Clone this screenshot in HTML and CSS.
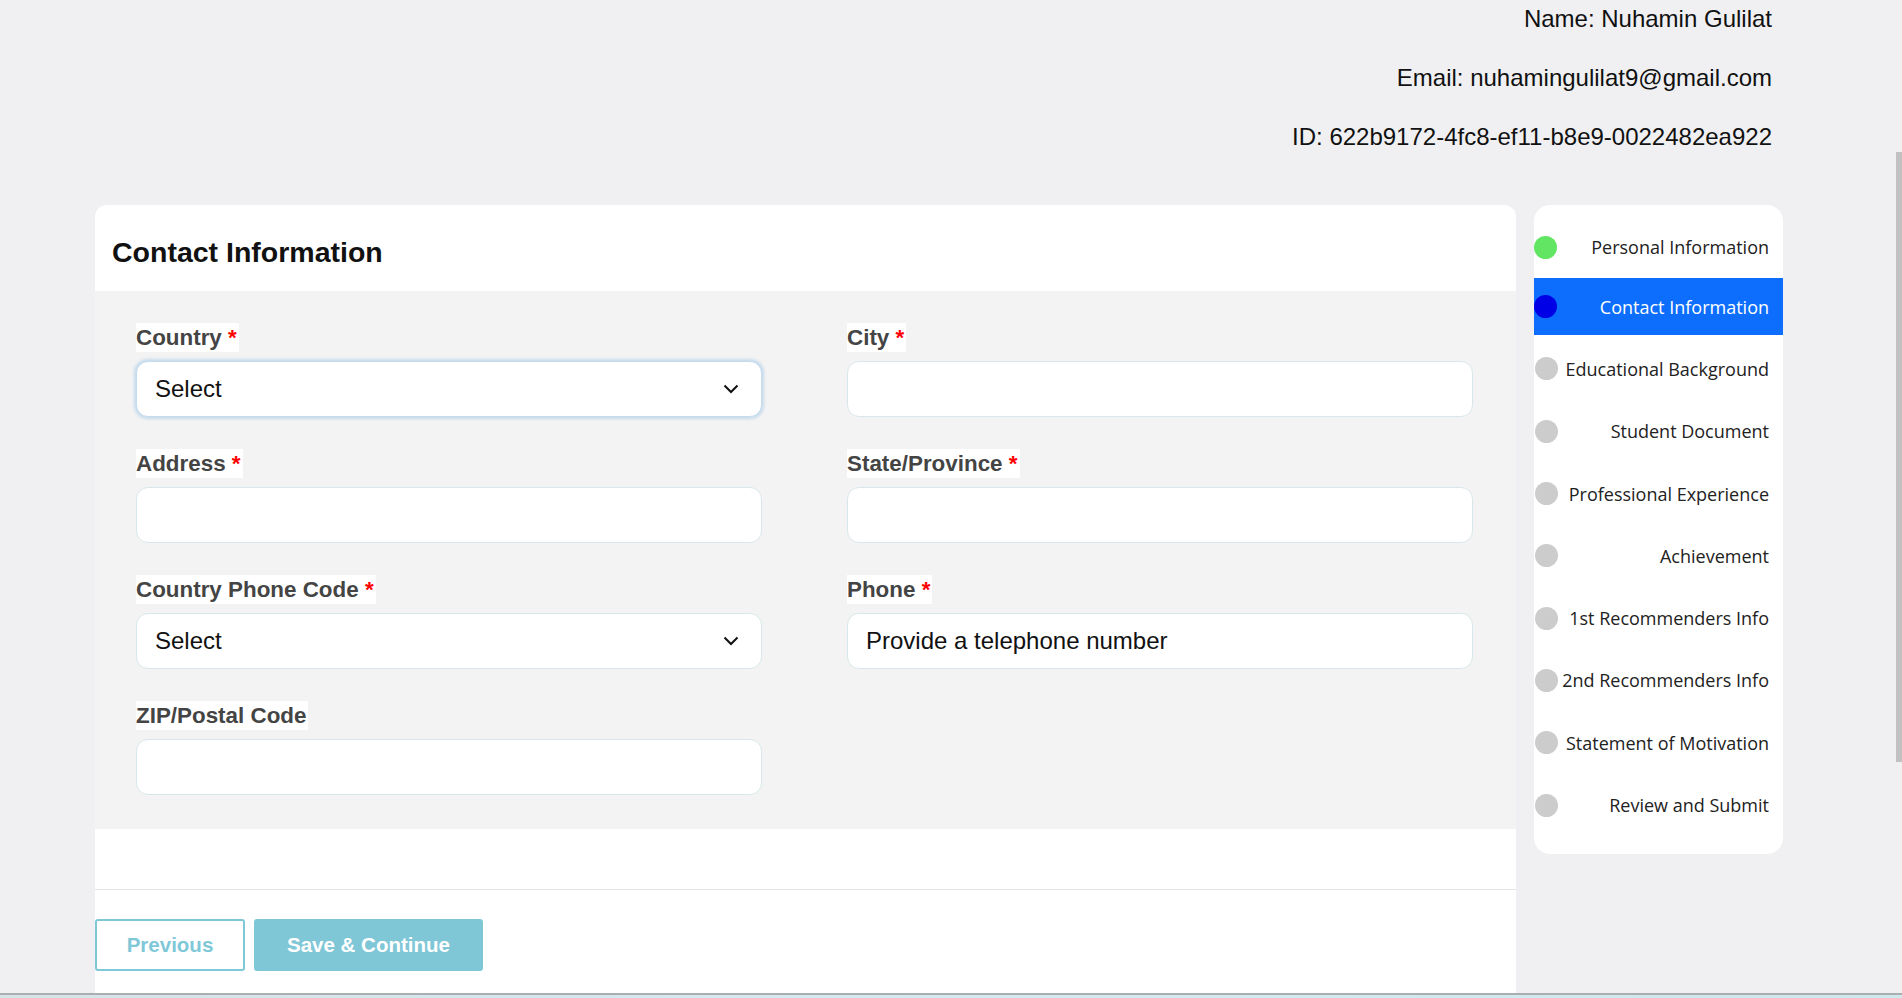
FILE: index.html
```html
<!DOCTYPE html>
<html lang="en">
<head>
<meta charset="utf-8">
<title>Contact Information</title>
<link rel="stylesheet" href="styles.css">
</head>
<body>
<div class="page">
  <header class="user-info">
    <div class="info-line">Name: Nuhamin Gulilat</div>
    <div class="info-line">Email: nuhamingulilat9@gmail.com</div>
    <div class="info-line">ID: 622b9172-4fc8-ef11-b8e9-0022482ea922</div>
  </header>

  <main class="main-row">
    <section class="form-card">
      <div class="card-head">
        <h2 class="card-title">Contact Information</h2>
      </div>
      <div class="card-body">
        <div class="field">
          <label class="field-label">Country <span class="req">*</span></label>
          <div class="control select focused">
            <span class="control-text">Select</span>
            <svg class="chev" width="16" height="10" viewBox="0 0 16 10"><polyline points="1.5,1.5 8,8 14.5,1.5" fill="none" stroke="#111" stroke-width="2"/></svg>
          </div>
        </div>
        <div class="field">
          <label class="field-label">City <span class="req">*</span></label>
          <div class="control"></div>
        </div>
        <div class="field">
          <label class="field-label">Address <span class="req">*</span></label>
          <div class="control"></div>
        </div>
        <div class="field">
          <label class="field-label">State/Province <span class="req">*</span></label>
          <div class="control"></div>
        </div>
        <div class="field">
          <label class="field-label">Country Phone Code <span class="req">*</span></label>
          <div class="control select">
            <span class="control-text">Select</span>
            <svg class="chev" width="16" height="10" viewBox="0 0 16 10"><polyline points="1.5,1.5 8,8 14.5,1.5" fill="none" stroke="#111" stroke-width="2"/></svg>
          </div>
        </div>
        <div class="field">
          <label class="field-label">Phone <span class="req">*</span></label>
          <div class="control"><span class="control-text">Provide a telephone number</span></div>
        </div>
        <div class="field">
          <label class="field-label">ZIP/Postal Code</label>
          <div class="control"></div>
        </div>
      </div>
      <div class="card-spacer"></div>
      <div class="card-foot">
        <button class="btn btn-outline">Previous</button>
        <button class="btn btn-fill">Save &amp; Continue</button>
      </div>
    </section>

    <aside class="steps">
      <div class="step"><span class="dot done"></span><span class="step-text">Personal Information</span></div>
      <div class="step active"><span class="dot current"></span><span class="step-text">Contact Information</span></div>
      <div class="step"><span class="dot"></span><span class="step-text">Educational Background</span></div>
      <div class="step"><span class="dot"></span><span class="step-text">Student Document</span></div>
      <div class="step"><span class="dot"></span><span class="step-text">Professional Experience</span></div>
      <div class="step"><span class="dot"></span><span class="step-text">Achievement</span></div>
      <div class="step"><span class="dot"></span><span class="step-text">1st Recommenders Info</span></div>
      <div class="step"><span class="dot"></span><span class="step-text">2nd Recommenders Info</span></div>
      <div class="step"><span class="dot"></span><span class="step-text">Statement of Motivation</span></div>
      <div class="step"><span class="dot"></span><span class="step-text">Review and Submit</span></div>
    </aside>
  </main>
</div>
<div class="bottom-band"></div>
<div class="scroll-thumb"></div>
</body>
</html>
```

FILE: styles.css
```css
* { box-sizing: border-box; }

html, body {
  margin: 0;
  padding: 0;
}

body {
  background: #f0f0f2;
  font-family: "Liberation Sans", Arial, sans-serif;
  color: #111;
  height: 998px;
  overflow: hidden;
}

.page {
  height: 993px;
  display: flex;
  flex-direction: column;
}

.user-info {
  display: flex;
  flex-direction: column;
  align-items: flex-end;
  gap: 31px;
  padding: 5px 130px 0 0;
  font-size: 24px;
  line-height: 28px;
  color: #111;
}

.main-row {
  display: flex;
  align-items: flex-start;
  gap: 18px;
  padding-left: 95px;
  margin-top: 54px;
  flex: 1;
  min-height: 0;
}

.form-card {
  width: 1421px;
  height: 100%;
  background: #fff;
  border-radius: 12px 12px 0 0;
  display: flex;
  flex-direction: column;
  overflow: hidden;
}

.card-head {
  height: 86px;
  display: flex;
  align-items: center;
  padding: 8px 0 0 17px;
}

.card-title {
  margin: 0;
  font-size: 28.5px;
  font-weight: bold;
  color: #111;
}

.card-body {
  background: #f3f3f3;
  padding: 32px 43px 34px 41px;
  display: grid;
  grid-template-columns: 626px 626px;
  column-gap: 85px;
  row-gap: 32px;
}

.field {
  display: flex;
  flex-direction: column;
  align-items: flex-start;
  gap: 9px;
}

.field-label {
  background: #fff;
  font-size: 22.4px;
  font-weight: bold;
  line-height: 29px;
  color: #444;
  padding: 0 2px 0 0;
}

.req { color: #f00; }

.control {
  width: 100%;
  height: 56px;
  background: #fff;
  border: 1px solid #d8e8ea;
  border-radius: 12px;
  display: flex;
  align-items: center;
  justify-content: space-between;
  padding: 0 22px 0 18px;
  font-size: 24px;
  color: #111;
}

.control.focused {
  border-color: #c5dcee;
  box-shadow: 0 0 3px 2px rgba(168, 204, 232, 0.6);
}

.chev { display: block; }

.card-spacer {
  height: 61px;
  border-bottom: 1px solid #e4e4e4;
}

.card-foot {
  display: flex;
  gap: 9px;
  padding-top: 29px;
}

.btn {
  height: 52px;
  font-family: "Liberation Sans", Arial, sans-serif;
  font-size: 20.5px;
  font-weight: bold;
  border-radius: 3px;
  cursor: pointer;
}

.btn-outline {
  width: 150px;
  background: #fff;
  color: #7ec8d8;
  border: 2px solid #7ec8d8;
}

.btn-fill {
  width: 229px;
  background: #7fc7d7;
  color: #fff;
  border: none;
}

.steps {
  width: 249px;
  background: #fff;
  border-radius: 16px;
  padding: 16px 0 20px 0;
  display: flex;
  flex-direction: column;
  gap: 5px;
}

.step {
  height: 57.3px;
  display: flex;
  align-items: center;
  justify-content: space-between;
  padding-right: 14px;
  font-family: "Open Sans", "Noto Sans", sans-serif;
  font-size: 18px;
  color: #222;
}

.step:first-child { height: 52px; }

.step.active {
  background: #0d6efd;
  color: #fff;
}

.dot {
  width: 23px;
  height: 23px;
  border-radius: 50%;
  background: #cccccc;
  flex: none;
  margin-left: 1px;
}

.dot.done { background: #62e562; margin-left: 0; }
.dot.current { background: #0000e6; margin-left: 0; }

.step-text { text-align: right; white-space: nowrap; }

.bottom-band {
  height: 5px;
  border-top: 2px solid #a9aeb0;
  background: linear-gradient(90deg, #d6e3e8, #d4eaf0 50%, #cfe8ec);
}

.scroll-thumb {
  position: fixed;
  right: 0;
  top: 152px;
  width: 6px;
  height: 610px;
  background: #c1c1c1;
}
```
